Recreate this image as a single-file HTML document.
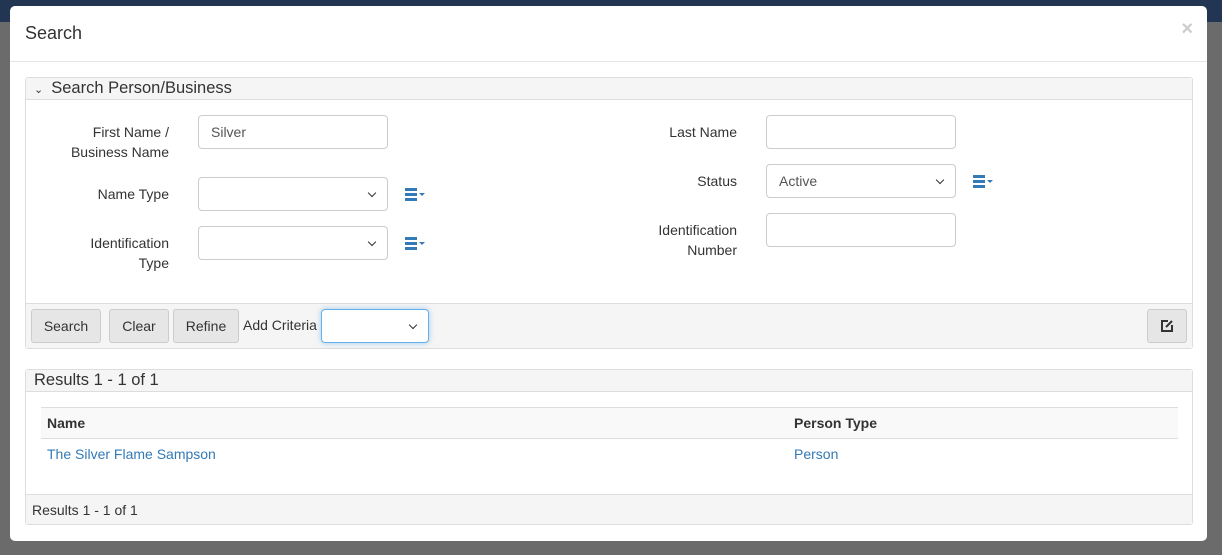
<!DOCTYPE html>
<html><head><style>
*{box-sizing:border-box}
body{margin:0;width:1222px;height:555px;overflow:hidden;background:#6b6b6b;font-family:"Liberation Sans",sans-serif;font-size:14px;color:#333;position:relative}
.top{position:absolute;left:0;top:0;width:1222px;height:22px;background:#223552}
.modal{position:absolute;left:10px;top:6px;width:1197px;height:535px;background:#fff;border-radius:5px}
.abs{position:absolute}
.hdr{border-bottom:1px solid #e5e5e5;height:56px}
.panel{position:absolute;border:1px solid #ddd;border-radius:3px;background:#fff}
.ph{background:#f5f5f5;border-bottom:1px solid #ddd;height:22px;font-size:16.5px;padding-left:8px;line-height:21px}
.inp{position:absolute;width:190px;height:34px;border:1px solid #ccc;border-radius:4px;background:#fff;padding:0 12px;line-height:32px;font-size:14px;color:#555}
.sel::after{content:"";position:absolute;right:12px;top:12px;width:5px;height:5px;border-right:1.6px solid #333;border-bottom:1.6px solid #333;transform:rotate(45deg)}
.lbl{position:absolute;text-align:right;width:150px;line-height:20px}
.btn{position:absolute;height:34px;border:1px solid #ccc;border-radius:3px;background:#e6e6e6;line-height:32px;text-align:center}
.ic{position:absolute;width:14px}
.ic i{display:block;height:3px;background:#337ab7;margin-bottom:2px;width:12px}
.ic b{position:absolute;left:14px;top:5px;border:3px solid transparent;border-top:3px solid #337ab7}
a{color:#337ab7;text-decoration:none}
</style></head><body>
<div class="top"></div>
<div class="modal">
 <div class="hdr"><div class="abs" style="left:15px;top:17px;font-size:18px">Search</div><div class="abs" style="right:14px;top:12px;font-size:20px;color:#ccc;font-weight:bold">×</div></div>
 <div class="panel" style="left:15px;top:71px;width:1168px;height:272px">
  <div class="ph"><span style="font-size:11px;margin-right:8px">⌄</span>Search Person/Business</div>
  <div class="lbl" style="left:-7px;top:44px">First Name /<br>Business Name</div>
  <div class="inp" style="left:172px;top:37px">Silver</div>
  <div class="lbl" style="left:-7px;top:106px">Name Type</div>
  <div class="inp sel" style="left:172px;top:99px"></div>
  <div class="ic" style="left:379px;top:110px"><i></i><i></i><i></i><b></b></div>
  <div class="lbl" style="left:-7px;top:155px">Identification<br>Type</div>
  <div class="inp sel" style="left:172px;top:148px"></div>
  <div class="ic" style="left:379px;top:159px"><i></i><i></i><i></i><b></b></div>
  <div class="lbl" style="left:561px;top:44px">Last Name</div>
  <div class="inp" style="left:740px;top:37px"></div>
  <div class="lbl" style="left:561px;top:93px">Status</div>
  <div class="inp sel" style="left:740px;top:86px">Active</div>
  <div class="ic" style="left:947px;top:97px"><i></i><i></i><i></i><b></b></div>
  <div class="lbl" style="left:561px;top:142px">Identification<br>Number</div>
  <div class="inp" style="left:740px;top:135px"></div>
  <div class="abs" style="left:0;top:225px;width:1166px;height:45px;background:#f5f5f5;border-top:1px solid #ddd">
   <div class="btn" style="left:5px;top:5px;width:70px">Search</div>
   <div class="btn" style="left:83px;top:5px;width:60px">Clear</div>
   <div class="btn" style="left:147px;top:5px;width:66px">Refine</div>
   <div class="abs" style="left:217px;top:13px">Add Criteria</div>
   <div class="inp sel" style="left:295px;top:5px;width:108px;border-color:#66afe9;box-shadow:0 0 6px rgba(102,175,233,.6)"></div>
   <div class="btn" style="left:1121px;top:5px;width:40px"><svg width="14" height="14" viewBox="0 0 14 14" style="margin-top:9px"><path d="M8 2H2v10h10V6" fill="none" stroke="#333" stroke-width="2"/><path d="M6 8l6-6" stroke="#333" stroke-width="2"/></svg></div>
  </div>
 </div>
 <div class="panel" style="left:15px;top:363px;width:1168px;height:156px">
  <div class="ph">Results 1 - 1 of 1</div>
  <div class="abs" style="left:15px;top:37px;width:1137px;height:32px;background:#f9f9f9;border-top:1px solid #ddd;border-bottom:1px solid #ddd;font-weight:bold;line-height:30px">
   <span class="abs" style="left:6px">Name</span><span class="abs" style="left:753px">Person Type</span></div>
  <a class="abs" style="left:21px;top:76px">The Silver Flame Sampson</a>
  <a class="abs" style="left:768px;top:76px">Person</a>
  <div class="abs" style="left:0;top:124px;width:1166px;height:30px;background:#f5f5f5;border-top:1px solid #ddd;line-height:30px;padding-left:6px">Results 1 - 1 of 1</div>
 </div>
</div>
</body></html>
